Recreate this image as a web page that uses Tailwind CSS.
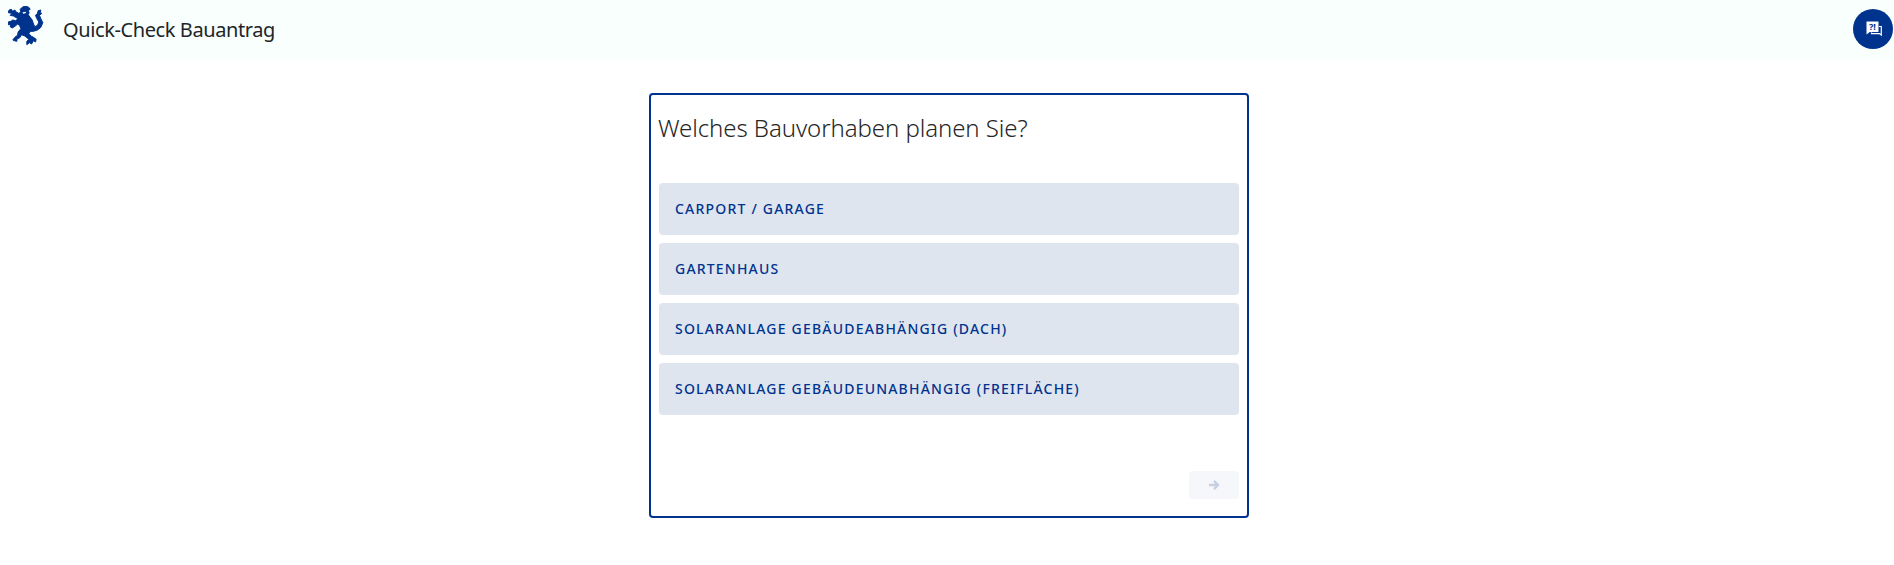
<!DOCTYPE html>
<html lang="de">
<head>
<meta charset="utf-8">
<script src="https://cdn.jsdelivr.net/npm/@tailwindcss/browser@4"></script>
<title>Quick-Check Bauantrag</title>
</head>
<body class="bg-white font-['Noto_Sans',sans-serif] text-[#212529]">
<header class="h-[61px] bg-[#f8fffd] flex items-center justify-between pl-[8px] pr-[1px]">
  <div class="flex items-center">
    <svg class="w-[36px] h-[40px] -mt-[9px]" viewBox="24 18 107 120" fill="#00338d">
      <path stroke="#00338d" stroke-width="3" stroke-linejoin="round" d="M27 30 L34 28 L37 34 L44 30 L48 36 L56 40 L62 36 L60 28 L66 22 L75 18 L86 22 L90 28 L84 32 L87 38 L84 44 L90 52 L96 60 L100 72 L104 80 L112 76 L116 66 L110 56 L106 46 L112 40 L114 32 L122 30 L120 38 L125 40 L118 46 L122 56 L128 68 L122 82 L112 90 L100 94 L92 94 L86 100 L92 108 L100 112 L108 118 L106 126 L100 122 L94 132 L88 128 L80 134 L80 124 L86 118 L74 108 L64 104 L60 112 L50 118 L50 124 L42 122 L38 120 L44 112 L52 106 L54 96 L62 86 L58 76 L52 72 L46 78 L36 84 L30 80 L32 74 L24 74 L24 66 L32 64 L38 60 L46 62 L54 56 L46 52 L40 48 L30 46 L36 40 L24 38 Z"/>
      <path d="M67 37 L78 35 L76 40 L69 41 Z" fill="#f8fffd"/>
    </svg>
    <span class="ml-[19px] text-[20px] leading-none tracking-[-0.4px] -mt-[1px]">Quick-Check Bauantrag</span>
  </div>
  <button class="w-10 h-10 -mt-[3px] rounded-full bg-[#00338d] flex items-center justify-center">
    <svg class="w-[16px] h-[16px] ml-[1px]" viewBox="0 0 16 16">
      <path d="M13 5.5h2.3v8.5l-2-1.4H5.5v-1" fill="none" stroke="#fff" stroke-width="1.2"/>
      <path d="M0.5 0.5h12v10.5H3.8L0.5 13.5z" fill="#fff"/>
      <text x="6.5" y="8.8" text-anchor="middle" font-size="9" font-weight="700" fill="#00338d" font-family="Noto Sans">?!</text>
    </svg>
  </button>
</header>
<main class="flex justify-center pt-[32px] pl-[4px]">
  <section class="w-[600px] h-[425px] border-2 border-[#00338d] rounded-[4px] px-2 flex flex-col">
    <h1 class="text-[24px] leading-[30px] tracking-[-0.08px] font-light -ml-[1px] mt-[18px] mb-[40px] text-[#262626]">Welches Bauvorhaben planen Sie?</h1>
    <div class="flex flex-col gap-2">
      <button class="h-[52px] pb-[2px] bg-[#dfe5ef] rounded-[4px] px-4 text-left uppercase text-[14px] font-medium tracking-[1.2px] text-[#00338d]">Carport / Garage</button>
      <button class="h-[52px] pb-[2px] bg-[#dfe5ef] rounded-[4px] px-4 text-left uppercase text-[14px] font-medium tracking-[1.2px] text-[#00338d]">Gartenhaus</button>
      <button class="h-[52px] pb-[2px] bg-[#dfe5ef] rounded-[4px] px-4 text-left uppercase text-[14px] font-medium tracking-[1.2px] text-[#00338d]">Solaranlage gebäudeabhängig (Dach)</button>
      <button class="h-[52px] pb-[2px] bg-[#dfe5ef] rounded-[4px] px-4 text-left uppercase text-[14px] font-medium tracking-[1.2px] text-[#00338d]">Solaranlage gebäudeunabhängig (Freifläche)</button>
    </div>
    <div class="flex justify-end mt-[56px]">
      <button class="w-[50px] h-[28px] rounded-[4px] bg-[#f6f7fb] flex items-center justify-center">
        <svg class="w-[12px] h-[12px]" viewBox="0 0 12 12" fill="none" stroke="#c5d0e3" stroke-width="2.4"><path d="M1 6h9M6 1.8L10 6l-4 4.2"/></svg>
      </button>
    </div>
  </section>
</main>
</body>
</html>
